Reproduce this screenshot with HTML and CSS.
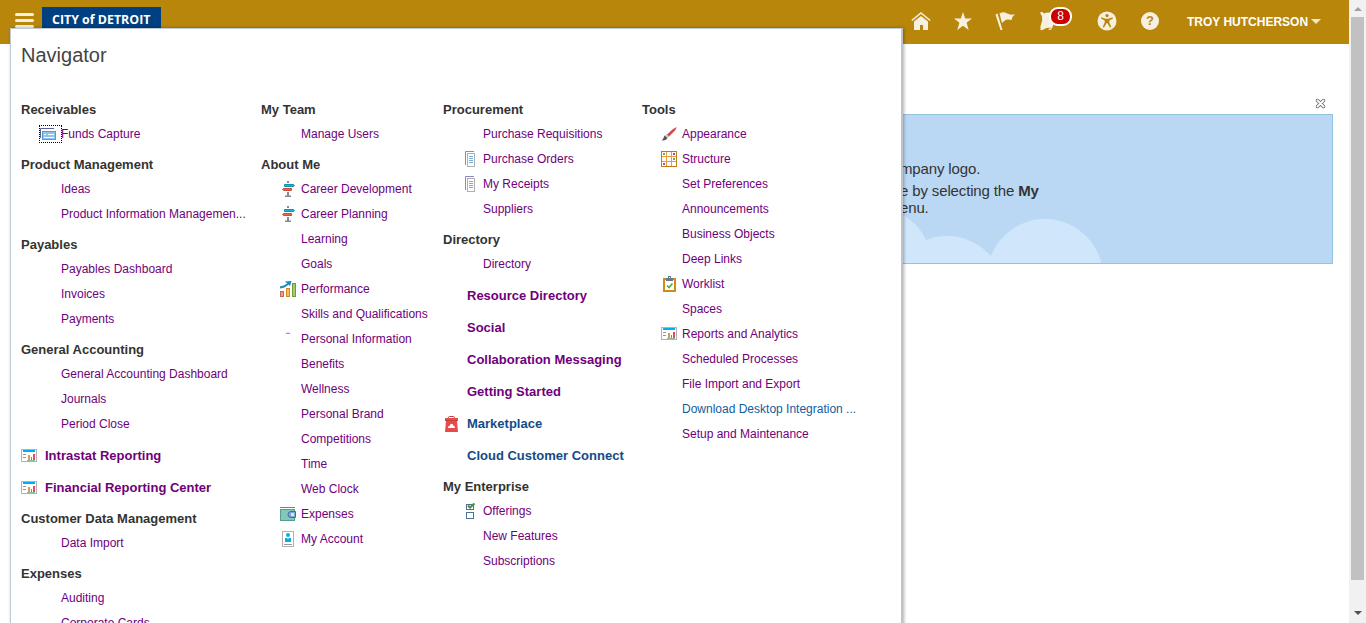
FILE: index.html
```html
<!DOCTYPE html>
<html lang="en">
<head>
<meta charset="utf-8">
<title>Navigator</title>
<link rel="stylesheet" href="styles.css">
</head>
<body>
<svg class="defs" aria-hidden="true">
  <symbol id="card" viewBox="0 0 18 14"><path d="M.5 10V.5H14" fill="none" stroke="#5b5f9b"/><rect x="2.500" y="3.500" width="13" height="8" fill="#8cc4f0" stroke="#5a9bcb"/><path d="M4 6.500h2M8 6.500h6M4 9.500h10" stroke="#fff"/></symbol>
  <symbol id="report" viewBox="0 0 16 16"><rect x=".5" y="1.500" width="15" height="12" fill="#fff" stroke="#b3b3b3"/><path d="M2 2h12v2H2z" fill="#00aeef"/><path d="M2 6.500h3M2 9.500h3" stroke="#8a98a0"/><path d="M8 7v5" stroke="#ef9438" stroke-width="2"/><path d="M10.500 9v3" stroke="#8478b8"/><path d="M13 6v6" stroke="#e8485e" stroke-width="2"/><path d="M6 12.500h8" stroke="#82bf9c"/></symbol>
  <symbol id="sign" viewBox="0 0 16 16"><path d="M8 0v2M8 11v4M5 15.500h6" stroke="#818b94" stroke-width="2"/><path d="M4.500 3.500h9l1 1-1 1h-9z" fill="#18b5cf" stroke="#0e93b0"/><path d="M11.500 7.500h-8l-1 1 1 1h8z" fill="#ee6354" stroke="#d14a3b"/></symbol>
  <symbol id="chart" viewBox="0 0 16 16"><rect x=".5" y="10.500" width="3" height="5" fill="#f0988a" stroke="#c5695c"/><rect x="6.500" y="7.500" width="3" height="8" fill="#f7bd5b" stroke="#cf8b22"/><rect x="12.500" y="2.500" width="3" height="13" fill="#a3cb70" stroke="#6d9c3f"/><path d="M0 6.500l4-1L8 3" fill="none" stroke="#1987c1" stroke-width="2"/><path d="M5 .5 11.500 0 10 5z" fill="#1987c1"/></symbol>
  <symbol id="arc" viewBox="0 0 16 16"><path d="M5 3q3-3 6 0-3-.4-6 0z" fill="#5c91c3"/></symbol>
  <symbol id="wallet" viewBox="0 0 16 16"><path d="M0 1.500h15" stroke="#4e9587"/><rect x=".5" y="3.500" width="14" height="11" fill="#82c7b7" stroke="#579c8c"/><path d="M15.500 5.500H11a3 3 0 0 0 0 6h4.500z" fill="#7da8d9" stroke="#416ba4"/><rect x="11" y="7" width="3" height="3" fill="#d4e7fa"/></symbol>
  <symbol id="badge" viewBox="0 0 16 16"><rect x="2.500" y=".5" width="11" height="15" fill="#fff" stroke="#b1b1b1"/><circle cx="8" cy="4" r="2" fill="#0aaee3"/><path d="M5 7h2l1 1 1-1h2v4H5z" fill="#0aaee3"/><path d="M4 13.500h8" stroke="#8e9ba4"/></symbol>
  <symbol id="pages" viewBox="0 0 16 16"><path d="M3.500 14V.5H12" fill="none" stroke="#8a8ac2"/><rect x="5.500" y="2.500" width="7" height="13" fill="#fff" stroke="#b0b0b0"/><path d="M7 5.500h4M7 7.500h4M7 9.500h4M7 11.500h4" stroke="#72addd"/></symbol>
  <symbol id="brush" viewBox="0 0 16 16"><path d="M16 1 12 3 5.500 9l2 2 6.500-6.500z" fill="#d4474d"/><path d="M5.500 8 8 10.500 6.500 12 4 9.500z" fill="#ccc"/><path d="M3.500 9.500 6.500 12Q5 15 .5 14.500 2.500 13 3.500 9.500z" fill="#555"/></symbol>
  <symbol id="grid" viewBox="0 0 16 16"><rect x=".5" y=".5" width="15" height="15" fill="#fff"/><path d="M5.500 0v16M10.500 0v16M0 5.500h16M0 10.500h16" stroke="#f19a3b"/><rect x=".5" y=".5" width="15" height="15" fill="none" stroke="#c27a20"/><path d="M2 2h2v2H2zM12 7h2v2h-2z" fill="#62ad57"/><path d="M12 2h2v2h-2zM2 12h2v2H2z" fill="#a94d9b"/></symbol>
  <symbol id="clip" viewBox="0 0 16 16"><rect x="3" y="3" width="11" height="12" fill="#fff" stroke="#d18a17" stroke-width="2"/><path d="M5 2h2V0h3v2h2v3H5z" fill="#67788a"/><path d="M8 1h1v1H8z" fill="#fff"/><path d="m6 9.500 2 2 3.500-4" fill="none" stroke="#55aa4b" stroke-width="1.700"/></symbol>
  <symbol id="bag" viewBox="0 0 16 16"><path d="M5.500 4V1.500q0-1 1-1h4q1 0 1 1V4" fill="none" stroke="#b84740"/><path d="M2 2h13v3h-1l1 11H2L3 5H2z" fill="#e64a4a"/><path d="M2 4.500h13" stroke="#ce3d3d"/><path d="M5 12q-.5-2 1.500-2 .5-2.500 2.500-2 1.500 0 1.500 2 2 0 1.500 2z" fill="#fff"/></symbol>
  <symbol id="checks" viewBox="0 0 16 16"><rect x="4.500" y="1.500" width="7" height="5" fill="#fff" stroke="#4e719c"/><rect x="4.500" y="9.500" width="7" height="6" fill="#fff" stroke="#4e719c"/><path d="m6 2.500 2 2L12.500.5" fill="none" stroke="#4c913d" stroke-width="2.200"/></symbol>
</svg>

<div class="page">
  <header class="topbar">
    <div class="burger"><i></i><i></i><i></i></div>
    <div class="brand">CITY of DETROIT</div>
    <nav class="tools">
      <svg class="home" width="20" height="20" viewBox="0 0 20 20"><path d="M.8 9.500 10 2l9.200 7.500" fill="none" stroke="#f7efdf" stroke-width="1.600"/><path d="M3 10.500 10 5l7 5.500V19h-5v-5H9v5H3z" fill="#f7efdf"/></svg>
      <svg class="star" width="20" height="20" viewBox="0 0 20 20"><path d="m10 1 2.200 6.500H19l-5.400 4.200L15.700 19 10 14.700 4.300 19l2.100-7.300L1 7.500h6.800z" fill="#f7efdf"/></svg>
      <svg class="flag" width="20" height="20" viewBox="0 0 20 20"><path d="M.5 3.500 2.500 2.500 7.500 19h-2z" fill="#f7efdf"/><path d="M4.500 2.500q4-2.500 7.500 0 4 2 8 .5-2.500 2-3.500 6-4-1-6 0-2 1.500-3.500 3z" fill="#f7efdf"/></svg>
      <div class="bell"><svg width="20" height="20" viewBox="0 0 20 20"><path d="M1.500 1h2l1.500 1.500Q11 0 14 4l1 8q-1 3-2 5-5-1-7.500 1-2 1.500-4 1v-4Q4 10 3 5L1.500 3z" fill="#f7efdf"/><path d="M9 18q3 2.500 4-1z" fill="#f7efdf"/></svg><b>8</b></div>
      <svg class="access" width="20" height="20" viewBox="0 0 20 20"><circle cx="10" cy="10" r="9.500" fill="#f7efdf"/><circle cx="10" cy="4.600" r="1.600" fill="#b8860b"/><path d="m4.500 6.300 4 1.500h3l4-1.500.5 1.200-3.700 1.900v2l2 4.500-1.300.6-2.500-4.300h-1L7 16.500l-1.300-.6 2-4.500v-2L4 7.500z" fill="#b8860b"/></svg>
      <div class="help">?</div>
      <div class="user">TROY HUTCHERSON<i></i></div>
    </nav>
  </header>
  <main class="content">
    <div class="close"><svg width="11" height="11" viewBox="0 0 11 11"><path d="m2.500 2.500 6 6m0-6-6 6" stroke="#666" stroke-width="3.500" stroke-linecap="round"/><path d="m2.500 2.500 6 6m0-6-6 6" stroke="#fff" stroke-width="1.800" stroke-linecap="round"/></svg></div>
    <section class="banner">
      <svg class="clouds" width="440" height="148" viewBox="0 0 440 148"><g fill="#d0e6fb"><circle cx="-24" cy="148" r="55"/><circle cx="47" cy="179" r="58"/><circle cx="145" cy="162" r="58"/></g></svg>
      <p>mpany logo.</p>
      <p>e by selecting the <b>My</b></p>
      <p>enu.</p>
    </section>
  </main>
</div>

<aside class="navigator">
  <h1>Navigator</h1>
  <div class="columns">
    <div class="col c1">
      <h2>Receivables</h2>
      <a><span class="focus"><svg class="card"><use href="#card"/></svg></span>Funds Capture</a>
      <h2>Product Management</h2>
      <a>Ideas</a>
      <a>Product Information Managemen...</a>
      <h2>Payables</h2>
      <a>Payables Dashboard</a>
      <a>Invoices</a>
      <a>Payments</a>
      <h2>General Accounting</h2>
      <a>General Accounting Dashboard</a>
      <a>Journals</a>
      <a>Period Close</a>
      <a class="top"><svg><use href="#report"/></svg>Intrastat Reporting</a>
      <a class="top"><svg><use href="#report"/></svg>Financial Reporting Center</a>
      <h2>Customer Data Management</h2>
      <a>Data Import</a>
      <h2>Expenses</h2>
      <a>Auditing</a>
      <a>Corporate Cards</a>
    </div>
    <div class="col c2">
      <h2>My Team</h2>
      <a>Manage Users</a>
      <h2>About Me</h2>
      <a><svg><use href="#sign"/></svg>Career Development</a>
      <a><svg><use href="#sign"/></svg>Career Planning</a>
      <a>Learning</a>
      <a>Goals</a>
      <a><svg><use href="#chart"/></svg>Performance</a>
      <a>Skills and Qualifications</a>
      <a><svg><use href="#arc"/></svg>Personal Information</a>
      <a>Benefits</a>
      <a>Wellness</a>
      <a>Personal Brand</a>
      <a>Competitions</a>
      <a>Time</a>
      <a>Web Clock</a>
      <a><svg><use href="#wallet"/></svg>Expenses</a>
      <a><svg><use href="#badge"/></svg>My Account</a>
    </div>
    <div class="col c3">
      <h2>Procurement</h2>
      <a>Purchase Requisitions</a>
      <a><svg><use href="#pages"/></svg>Purchase Orders</a>
      <a><svg><use href="#pages"/></svg>My Receipts</a>
      <a>Suppliers</a>
      <h2>Directory</h2>
      <a>Directory</a>
      <a class="top">Resource Directory</a>
      <a class="top">Social</a>
      <a class="top">Collaboration Messaging</a>
      <a class="top">Getting Started</a>
      <a class="top fresh"><svg><use href="#bag"/></svg>Marketplace</a>
      <a class="top fresh">Cloud Customer Connect</a>
      <h2>My Enterprise</h2>
      <a><svg><use href="#checks"/></svg>Offerings</a>
      <a>New Features</a>
      <a>Subscriptions</a>
    </div>
    <div class="col c4">
      <h2>Tools</h2>
      <a><svg><use href="#brush"/></svg>Appearance</a>
      <a><svg><use href="#grid"/></svg>Structure</a>
      <a>Set Preferences</a>
      <a>Announcements</a>
      <a>Business Objects</a>
      <a>Deep Links</a>
      <a><svg><use href="#clip"/></svg>Worklist</a>
      <a>Spaces</a>
      <a><svg><use href="#report"/></svg>Reports and Analytics</a>
      <a>Scheduled Processes</a>
      <a>File Import and Export</a>
      <a class="fresh">Download Desktop Integration ...</a>
      <a>Setup and Maintenance</a>
    </div>
  </div>
</aside>

<div class="scrollbar"><i class="up"></i><div class="thumb"></div><i class="down"></i></div>
</body>
</html>
```
FILE: styles.css
```css
* { box-sizing: border-box; }
body {
  margin: 0;
  width: 1366px;
  height: 623px;
  overflow: hidden;
  position: relative;
  display: flex;
  background: #fff;
  color: #333;
  font-family: "Liberation Sans", Arial, sans-serif;
}
h1, h2, p { margin: 0; }
.defs { position: absolute; width: 0; height: 0; }
.page { width: 1349px; }

.topbar { height: 44px; background: #b8860b; display: flex; align-items: flex-start; }
.burger { display: flex; flex-direction: column; gap: 3px; padding: 13px 0 0 15px; width: 42px; }
.burger i { width: 19px; height: 3px; border-radius: 2px; background: #f7efdf; }
.brand {
  margin-top: 7px;
  width: 119px;
  height: 30px;
  background: #004080;
  color: #fff;
  padding-left: 10px;
  font: bold 12.4px/25px "Open Sans", "Noto Sans", sans-serif;
  white-space: nowrap;
}
.tools { display: flex; align-items: center; height: 41px; margin-left: 750px; }
.star { margin-left: 22px; }
.flag { margin-left: 22px; }
.bell { margin-left: 24px; width: 39px; height: 20px; position: relative; }
.bell b {
  position: absolute;
  left: 10px;
  top: -4px;
  width: 23px;
  height: 19px;
  border: 2px solid #fff;
  border-radius: 9px;
  background: #c00;
  color: #fff;
  font: 12px/15px "Liberation Sans", sans-serif;
  text-align: center;
}
.access { margin-left: 19px; }
.help {
  margin-left: 24px;
  width: 18px;
  height: 18px;
  border-radius: 50%;
  background: #f7efdf;
  color: #b8860b;
  font: bold 13px/18px "Liberation Sans", sans-serif;
  text-align: center;
}
.user { display: flex; align-items: center; margin-left: 28px; padding-top: 2px; color: #fff; font-size: 12px; font-weight: bold; white-space: nowrap; }
.user i { margin-left: 3px; border: 5px solid transparent; border-top-color: #f3e6c8; border-bottom: 0; }

.content { padding: 54px 16px 0 0; }
.close { display: flex; justify-content: flex-end; height: 16px; padding-right: 7px; }
.banner {
  position: relative;
  height: 150px;
  margin-left: 27px;
  padding: 45px 0 0 872px;
  background: #bad8f3;
  border: 1px solid #93c2e3;
  overflow: hidden;
}
.banner p { position: relative; font-size: 15px; line-height: 18px; letter-spacing: -.14px; white-space: nowrap; }
.banner p:nth-of-type(2) { margin-top: 4px; }
.banner p:nth-of-type(3) { margin-top: -1px; }
.clouds { position: absolute; left: 872px; top: 0; }

.navigator {
  position: absolute;
  left: 10px;
  top: 28px;
  width: 893px;
  height: 620px;
  padding: 13px 0 0 10px;
  background: #fff;
  border: 1px solid #bfcad5;
  border-right: 2px solid #bdc3c9;
  box-shadow: 1px 0 3px rgba(0, 0, 0, .3);
}
h1 { height: 49px; font-size: 20px; font-weight: normal; line-height: 26px; color: #444; }
.columns { display: flex; }
.c1 { width: 240px; }
.c2 { width: 182px; }
.c3 { width: 199px; }
.c4 { width: 240px; }
h2 { height: 30px; padding-top: 10px; font-size: 13px; line-height: 18px; color: #333; white-space: nowrap; }
.col a {
  display: flex;
  align-items: center;
  position: relative;
  height: 25px;
  padding-left: 40px;
  color: #70007b;
  font-size: 12px;
  white-space: nowrap;
}
.col a svg { width: 16px; height: 16px; margin: 1px 5px 0 -21px; flex: none; }
.col .top { height: 32px; padding: 7px 0 0 24px; font-size: 13px; font-weight: bold; }
.col .top svg { margin: 0 8px 0 -24px; }
.col .fresh { color: #145c9e; }
.col .top.fresh { color: #134b86; }
.focus { display: flex; width: 23px; height: 18px; margin: 1px -1px 0 -22px; border: 1px dotted #000; }
.col a .card { width: 18px; height: 14px; margin: 2px 0 0; }

.scrollbar { width: 17px; height: 623px; padding: 7px 2px 8px; background: #f1f1f1; display: flex; flex-direction: column; align-items: center; }
.thumb { width: 13px; height: 563px; margin-top: 6px; background: #c1c1c1; }
.up { border: 4px solid transparent; border-bottom-color: #a0a0a0; border-top: 0; }
.down { margin-top: auto; border: 4px solid transparent; border-top-color: #505050; border-bottom: 0; }
```
